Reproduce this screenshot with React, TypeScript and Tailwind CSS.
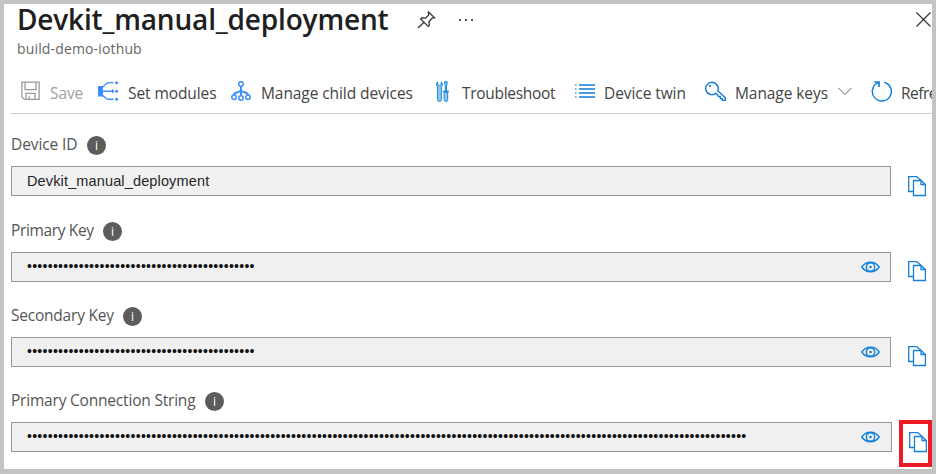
import type { ReactNode } from 'react';

const ui = "font-['Open_Sans','Noto_Sans',sans-serif]";

function SaveIcon() {
  return (
    <svg width="20" height="20" viewBox="0 0 20 20" fill="none" stroke="#9a9a9a" strokeWidth="1.3">
      <path d="M.9 1.200h17.200v17.200H3.400L.9 16z" />
      <path d="M4 1.200v7.500h11V1.200M5 18.400v-6h9v6M8.200 18.400v-3.200" />
    </svg>
  );
}

function ModulesIcon() {
  return (
    <svg width="21" height="20" viewBox="0 0 21 20" fill="none" stroke="#3e8ef7" strokeWidth="1.4">
      <rect x="0" y="5" width="5" height="10.5" fill="#3e8ef7" stroke="none" />
      <path d="M4.500 6C7 5 7 2 11 1.600h4.500M4.500 10.200h11M4.500 14.500c2.500 1 2.500 3.600 6.500 3.800h4.500" />
      <path d="M14 8.500l1.700 1.700-1.700 1.700" strokeWidth="1.200" />
      <g fill="#3e8ef7" stroke="none">
        <circle cx="18.600" cy="1.700" r="1.500" />
        <circle cx="18.600" cy="10.200" r="1.500" />
        <circle cx="18.600" cy="18.200" r="1.500" />
      </g>
    </svg>
  );
}

function ChildIcon() {
  return (
    <svg width="20" height="20" viewBox="0 0 20 20" fill="none" stroke="#3e8ef7" strokeWidth="1.5">
      <circle cx="10" cy="3" r="2.300" />
      <circle cx="3" cy="16.200" r="2.200" />
      <circle cx="10" cy="17" r="2.200" />
      <circle cx="17" cy="16.200" r="2.200" />
      <path d="M10 5.300v9.500M10 9.500c-2 2.800-6.500.5-7 4.500M10 9.500c2 2.800 6.500.5 7 4.500" strokeWidth="2" />
    </svg>
  );
}

function ToolsIcon() {
  return (
    <svg width="14" height="21" viewBox="0 0 14 21" fill="#8fc8f2" stroke="#1b86d8" strokeWidth="1">
      <path d="M1.700.8C.3 2 0 4.500 1.600 5.800V18.500a1.900 1.900 0 0 0 3.800 0V5.800C7 4.500 6.700 2 5.300.8V3.500l-1.800 1-1.800-1z" />
      <path d="M8.700.7h2.400v3l-.6 1V10h-1.200V4.700l-.6-1z" />
      <path d="M8.100 11h3.600v7.700a1.800 1.800 0 0 1-3.600 0z" />
      <path d="M6.900 10.500H12.900" strokeWidth="1.600" />
    </svg>
  );
}

function ListIcon() {
  return (
    <svg width="20" height="14" viewBox="0 0 20 14" stroke="#0f7bd8" strokeWidth="1.500">
      <path d="M4 1h16M4 5h16M4 9h16M4 13h16" />
      <path d="M0 1h1.500M0 5h1.500M0 9h1.500M0 13h1.500" strokeOpacity=".75" />
    </svg>
  );
}

function KeyIcon() {
  return (
    <svg width="21" height="20" viewBox="0 0 21 20" fill="none" stroke="#0f7bd8" strokeWidth="1.400" strokeLinejoin="round">
      <path d="M10.800 12.300A6.200 6.200 0 1 1 12.700 9.700L20.300 16.800V19.400H17.200V17.600H15.300V15.500H13.400L12.300 13.600z" />
      <circle cx="5" cy="5" r="1.100" fill="#0f7bd8" stroke="none" />
    </svg>
  );
}

function RefreshIcon() {
  return (
    <svg width="21" height="21" viewBox="0 0 21 21" fill="none" stroke="#0f7bd8" strokeWidth="1.400">
      <path d="M13.300 1.300A9.500 9.500 0 1 1 7.200 1.700" />
      <path d="M3.300 1H8V6" strokeWidth="1.600" />
    </svg>
  );
}

function CopyIcon() {
  return (
    <svg className="block" width="18" height="21" viewBox="0 0 18 21" fill="none" stroke="#1480da" strokeWidth="1.300">
      <path d="M5.500 15.500H.7V.5H8.500L13 4.200" />
      <path d="M5.500 4.500H13L17.400 8.500V19.500H5.500zM13 4.500V8.500H17.400" />
    </svg>
  );
}

function EyeIcon() {
  return (
    <svg className="block" width="19" height="12" viewBox="0 0 19 12" fill="none" stroke="#1480da" strokeWidth="1.400">
      <path d="M.8 6C5 -.4 14-.4 18.200 6C14 12.400 5 12.400.8 6z" />
      <circle cx="9.500" cy="6" r="4.200" />
      <circle cx="9.500" cy="6" r="1.300" fill="#1480da" stroke="none" />
    </svg>
  );
}

function Tool({ icon, label, iconBox, labelClass }: { icon: ReactNode; label: string; iconBox: string; labelClass: string }) {
  return (
    <button className="flex h-full shrink-0 items-center whitespace-nowrap">
      <span className={`flex shrink-0 items-center ${iconBox}`}>{icon}</span>
      <span className={`mt-[3px] text-left text-[15.5px] leading-[22px] ${labelClass}`}>{label}</span>
    </button>
  );
}

function Field({ label, labelClass, value, secret, dots = 0, marked, height }: {
  label: string; labelClass: string; value?: string; secret?: boolean; dots?: number; marked?: boolean; height: string;
}) {
  return (
    <section className={`shrink-0 ${height}`}>
      <div className="flex h-[36px] items-start">
        <span className={`mt-[3px] shrink-0 whitespace-nowrap text-[15.5px] leading-[22px] text-[#555] ${labelClass}`}>{label}</span>
        <span className="mt-[6px] flex h-[19px] w-[19px] items-center justify-center rounded-full bg-[#5c5c5c] text-[12px] leading-none text-white">i</span>
      </div>
      <div className="flex items-start">
        <div className={`flex h-[30px] items-center justify-between border border-[#979797] bg-[#f0f0f0] pl-[15px] ${marked ? 'w-[881px] pr-[11px]' : 'w-[880px] pr-[10px]'}`}>
          {secret ? (
            <span className="-mt-[2px] whitespace-nowrap font-['Liberation_Sans',sans-serif] text-[14px] leading-[28px] tracking-[0.275px] text-[#111]">{'•'.repeat(dots)}</span>
          ) : (
            <span className="font-['Liberation_Sans',sans-serif] text-[14.5px] leading-[28px] tracking-[0.14px] text-[#262626]">{value}</span>
          )}
          {secret && <EyeIcon />}
        </div>
        {marked ? (
          <button className="-mt-[2px] ml-[7px] flex h-[47px] w-[33px] shrink-0 items-start border-4 border-[#ed1c24] pt-[8px] pl-[6px]"><CopyIcon /></button>
        ) : (
          <button className={`ml-[17px] shrink-0 ${secret ? 'mt-[9px]' : 'mt-[10px]'}`}><CopyIcon /></button>
        )}
      </div>
    </section>
  );
}

export default function App() {
  return (
    <main className={`flex h-[474px] w-[936px] flex-col overflow-hidden border-4 border-b-[5px] border-[#c3c3c3] bg-white ${ui}`}>
      <header className="h-[65px] shrink-0 pl-[13px]">
        <div className="flex h-[33px] items-start">
          <h1 className="-mt-px w-[400px] shrink-0 whitespace-nowrap text-[28px] leading-[32px] font-semibold tracking-[-0.17px] text-[#202020]">Devkit_manual_deployment</h1>
          <svg className="mt-[7px]" width="19" height="18" viewBox="0 0 19 18" fill="none" stroke="#333" strokeWidth="1.300">
            <path d="M1 17l5.700-5.500M11.500 1l6 5.800-2.200.3-3.300 3.500.2 3.800-1 1-7.500-7.500 1-1 3.800.3 3-3z" />
          </svg>
          <span className="mt-[15px] ml-[23px] flex gap-[4px]">
            <i className="h-[2px] w-[2px] bg-[#555]" /><i className="h-[2px] w-[2px] bg-[#555]" /><i className="h-[2px] w-[2px] bg-[#555]" />
          </span>
          <svg className="mt-[8px] mr-[1px] ml-auto" width="15" height="15" viewBox="0 0 15 15" stroke="#333" strokeWidth="1.200"><path d="M.5.5l14 14M14.500.5l-14 14" /></svg>
        </div>
        <p className="mt-px text-[14px] leading-[22px] tracking-[0.15px] text-[#666]">build-demo-iothub</p>
      </header>
      <nav className="ml-[7px] flex h-[45px] shrink-0 items-center overflow-hidden border-b border-[#cfcfcf] pl-[10px] tracking-[-0.08px] text-[#444]">
        <Tool icon={<SaveIcon />} label="Save" iconBox="w-[29px]" labelClass="w-[48px] text-[#a0a0a0]" />
        <Tool icon={<ModulesIcon />} label="Set modules" iconBox="w-[30px]" labelClass="w-[103px]" />
        <Tool icon={<ChildIcon />} label="Manage child devices" iconBox="w-[30px]" labelClass="w-[175px]" />
        <Tool icon={<ToolsIcon />} label="Troubleshoot" iconBox="w-[26px]" labelClass="w-[113px] tracking-[-0.3px]" />
        <Tool icon={<ListIcon />} label="Device twin" iconBox="w-[29px]" labelClass="w-[101px]" />
        <Tool icon={<KeyIcon />} label="Manage keys" iconBox="w-[30px]" labelClass="w-[103px]" />
        <svg className="mr-[19px] shrink-0" width="14" height="9" viewBox="0 0 14 9" fill="none" stroke="#666"><path d="M.5 1L7 7.500 13.500 1" /></svg>
        <Tool icon={<RefreshIcon />} label="Refresh" iconBox="w-[30px]" labelClass="w-[60px] tracking-[-0.5px]" />
      </nav>
      <div className="flex flex-col pt-[16px] pl-[7px]">
        <Field label="Device ID" labelClass="w-[76px] tracking-[-0.1px]" value="Devkit_manual_deployment" height="h-[86px]" />
        <Field label="Primary Key" labelClass="w-[92px] tracking-[-0.35px]" secret dots={44} height="h-[85px]" />
        <Field label="Secondary Key" labelClass="w-[112px] tracking-[-0.22px]" secret dots={44} height="h-[85px]" />
        <Field label="Primary Connection String" labelClass="w-[194px] tracking-[-0.2px]" secret dots={139} marked height="h-[85px]" />
      </div>
    </main>
  );
}
